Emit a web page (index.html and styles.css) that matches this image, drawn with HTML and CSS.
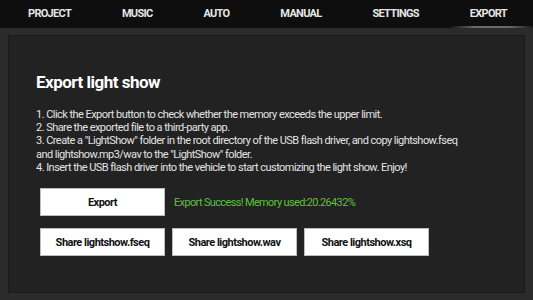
FILE: index.html
```html
<!DOCTYPE html>
<html lang="en">
<head>
  <meta charset="UTF-8" />
  <title>Export light show</title>
  <link rel="stylesheet" href="styles.css">
</head>
<body>
  <nav class="tabs">
    <div class="tab">PROJECT</div>
    <div class="tab">MUSIC</div>
    <div class="tab">AUTO</div>
    <div class="tab">MANUAL</div>
    <div class="tab">SETTINGS</div>
    <div class="tab active">EXPORT</div>
  </nav>
  <main class="frame">
    <section class="panel">
      <h1>Export light show</h1>
      <ol class="steps">
        <li>1. Click the Export button to check whether the memory exceeds the upper limit.</li>
        <li>2. Share the exported file to a third-party app.</li>
        <li>3. Create a "LightShow" folder in the root directory of the USB flash driver, and copy lightshow.fseq and lightshow.mp3/wav to the "LightShow" folder.</li>
        <li>4. Insert the USB flash driver into the vehicle to start customizing the light show. Enjoy!</li>
      </ol>
      <div class="row">
        <button class="btn">Export</button>
        <span class="status">Export Success! Memory used:20.26432%</span>
      </div>
      <div class="row">
        <button class="btn">Share lightshow.fseq</button>
        <button class="btn">Share lightshow.wav</button>
        <button class="btn">Share lightshow.xsq</button>
      </div>
    </section>
  </main>
</body>
</html>
```
FILE: styles.css
```css
/* Dark export page */
body {
  margin: 0;
  height: 300px;
  background: #2b2b2b;
  font-family: Roboto, "Liberation Sans", sans-serif;
  color: #e2e2e2;
  display: flex;
  flex-direction: column;
  overflow: hidden;
}
/* Top tabs */
.tabs {
  height: 28px;
  background: #0e0e0e;
  display: flex;
  justify-content: space-between;
  padding: 0 1px 0 3px;
}
.tab {
  padding: 0 25px;
  font-size: 11px;
  font-weight: bold;
  letter-spacing: -0.7px;
  color: #e6e6e6;
  line-height: 28px;
  position: relative;
}
.tab.active::after {
  content: "";
  position: absolute;
  left: 4px;
  right: -4px;
  bottom: 0;
  height: 2px;
  background: linear-gradient(to right, rgba(120,120,120,0), #6a6a6a 30%, #6a6a6a 70%, rgba(120,120,120,0));
}
/* Content frame */
.frame {
  flex: 1;
  padding: 7px 8px 7px 8px;
  display: flex;
}
.panel {
  flex: 1;
  background: #222;
  border: 1px solid #1a1a1a;
  padding: 36px 50px 0 27px;
}
h1 {
  margin: 0 0 16px;
  font-size: 17px;
  line-height: 20px;
  letter-spacing: -0.5px;
  color: #fff;
}
.steps {
  list-style: none;
  margin: 0 0 14px;
  padding: 0;
  font-size: 11px;
  line-height: 13.2px;
  letter-spacing: -0.55px;
}
.row {
  display: flex;
  align-items: center;
  gap: 7px;
  margin-left: 4px;
  margin-bottom: 12px;
}
.btn {
  width: 125px;
  height: 28px;
  background: #fff;
  border: 1px solid #bdbdbd;
  font-family: inherit;
  font-size: 11px;
  font-weight: bold;
  letter-spacing: -0.5px;
  color: #111;
  padding: 0;
}
.status {
  margin-left: 2px;
  font-size: 11px;
  letter-spacing: -0.65px;
  color: #5cc13c;
}
```
